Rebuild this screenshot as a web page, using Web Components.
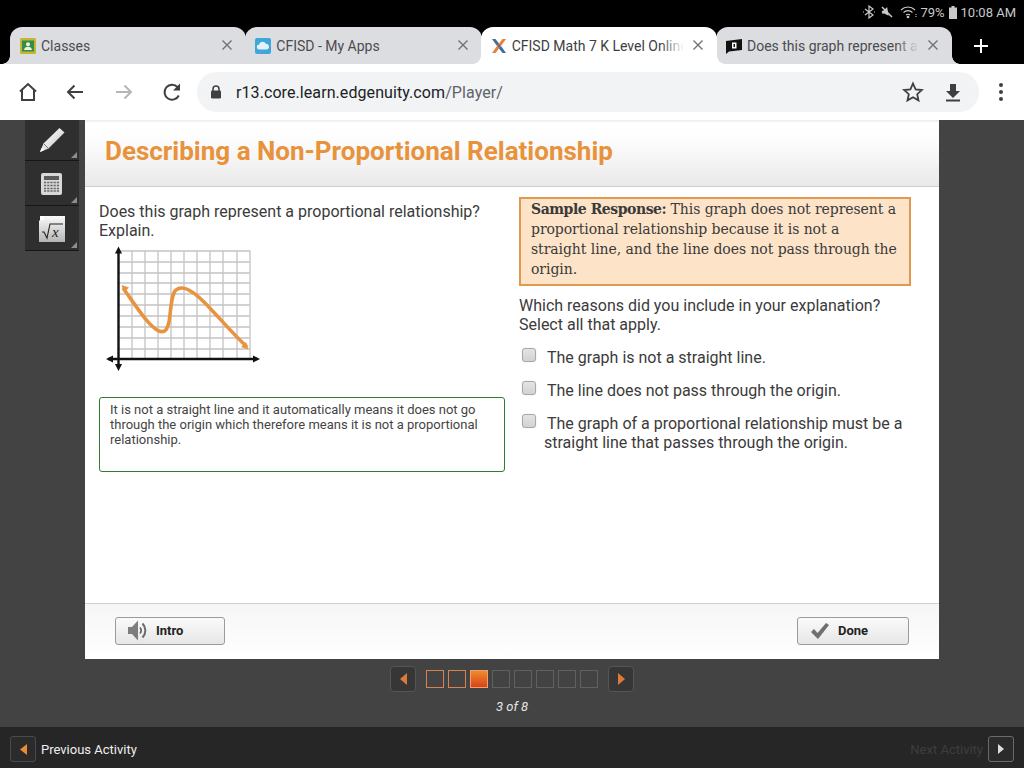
<!DOCTYPE html>
<html>
<head>
<meta charset="utf-8">
<title>Describing a Non-Proportional Relationship</title>
<style>
html, body { margin: 0; height: 100%; }
body {
  width: 1024px;
  height: 768px;
  overflow: hidden;
  display: flex;
  flex-direction: column;
  font-family: Roboto, sans-serif;
  background: #434343;
}
</style>
</head>
<body>
<status-bar></status-bar>
<tab-strip>
  <tab-item>
    <svg slot="icon" width="16" height="16" viewBox="0 0 16 16"><rect width="16" height="16" rx="1.500" fill="#c9b52e"/><rect x="2" y="2.500" width="12" height="11" fill="#2f8f4e"/><circle cx="8" cy="6.300" r="2" fill="#f3f0d8"/><path d="M4 12c.4-2.400 2-3.200 4-3.200s3.600.8 4 3.200z" fill="#f3f0d8"/></svg>
    Classes
  </tab-item>
  <tab-item>
    <svg slot="icon" width="16" height="16" viewBox="0 0 16 16"><rect width="16" height="16" rx="2" fill="#3fa6d8"/><path d="M4.500 11.500a2.500 2.500 0 0 1-.3-5 3.500 3.500 0 0 1 6.600-.8 2.900 2.900 0 0 1 .6 5.800z" fill="#e4f3fa"/></svg>
    CFISD - My Apps
  </tab-item>
  <tab-item active>
    <svg slot="icon" width="16" height="16" viewBox="0 0 16 16"><path d="M1 1l3.500 0L8 5.500 6 8z" fill="#4a6f96"/><path d="M15 1h-3.500L8 5.500 10 8z" fill="#e5813a"/><path d="M1 15h3.500L8 10.500 6 8z" fill="#e5813a"/><path d="M15 15h-3.500L8 10.500 10 8z" fill="#3a6ea5"/><path d="M6 8l2-2.500L10 8l-2 2.500z" fill="#8a5a50"/></svg>
    CFISD Math 7 K Level Online
  </tab-item>
  <tab-item>
    <svg slot="icon" width="16" height="16" viewBox="0 0 16 16"><path d="M0 3l16-2v11L3 13.500 0 16z" fill="#111"/><path d="M6 4.500h4.500v6H6z" fill="#fff"/><path d="M7.500 6h1.500v3H7.500z" fill="#111"/></svg>
    Does this graph represent a proportional
  </tab-item>
</tab-strip>
<url-bar></url-bar>
<player-stage>
  <tool-rail slot="tools"></tool-rail>
  <lesson-card slot="card">
    <span slot="title">Describing a Non-Proportional Relationship</span>
    <question-pane slot="left"></question-pane>
    <reason-pane slot="right"></reason-pane>
    <push-button slot="footer" kind="intro" style="width:110px">Intro</push-button>
    <push-button slot="footer" kind="done" style="width:112px">Done</push-button>
  </lesson-card>
  <page-nav slot="nav" current="3" total="8"></page-nav>
</player-stage>
<activity-bar></activity-bar>

<script>
function define(name, html, extra) {
  customElements.define(name, class extends HTMLElement {
    constructor() {
      super();
      this.attachShadow({ mode: "open" });
      this.shadowRoot.innerHTML = html;
      if (extra) extra(this);
    }
  });
}

define("status-bar", /*html*/ `
<style>
:host { display: flex; height: 27px; background: #000; color: #c9c9c9; justify-content: flex-end; align-items: center;
  font-size: 13px; padding: 0 8px 3px 0; box-sizing: border-box; gap: 4px; font-family: Roboto, sans-serif; }
svg { display: block; }
</style>
<svg width="12" height="14" viewBox="0 0 12 14" fill="none" stroke="#c9c9c9" stroke-width="1.200" style="margin-right:1px"><path d="M2 4l8 6-4 3V1l4 3-8 6"/><path d="M0 7h1M11 7h1"/></svg>
<svg width="14" height="14" viewBox="0 0 14 14" style="margin-right:2px"><path d="M2 5h2l4-3v9L4 8H2z" fill="#c9c9c9" transform="rotate(-10 7 7)"/><path d="M2 2l10 10" stroke="#c9c9c9" stroke-width="1.500"/></svg>
<svg width="18" height="14" viewBox="0 0 18 14" fill="none" stroke="#c9c9c9" stroke-width="1.100" style="margin-right:-2px"><path d="M1 5c4-4 10-4 14 0M3.500 7.500c2.500-2.500 6.500-2.500 9 0M6 10c1-1 3-1 4 0"/><circle cx="8" cy="12" r=".8" fill="#c9c9c9"/><path d="M16 9v3" stroke-dasharray="1 1"/></svg>
<span>79%</span>
<svg width="8" height="13" viewBox="0 0 8 13"><path d="M2.500 0h3v1.500H8V13H0V1.500h2.500z" fill="#c9c9c9"/></svg>
<span>10:08 AM</span>
`);

define("tab-strip", /*html*/ `
<style>
:host { display: flex; height: 37px; background: #000; padding-left: 10px; align-items: stretch; box-sizing: border-box; }
.plus { width: 59px; display: flex; align-items: center; justify-content: center; }
</style>
<slot></slot>
<div class="plus"><svg width="16" height="16" viewBox="0 0 16 16"><path d="M8 1v14M1 8h14" stroke="#fff" stroke-width="2"/></svg></div>
`);

define("tab-item", /*html*/ `
<style>
:host { --tab: #dcdde0; display: flex; align-items: center; width: 236.330px; box-sizing: border-box; background: var(--tab); color: #4a4c50;
  border-radius: 12px 12px 0 0; padding: 0 13px 0 10px; font-size: 14px; margin-right: -1px; position: relative; }
:host([active]) { --tab: #fff; color: #3c4043; z-index: 1; }
:host::before, :host::after { content: ""; position: absolute; bottom: 0; width: 8px; height: 8px; }
:host::before { left: -8px; background: radial-gradient(circle at 0 0, transparent 7.500px, var(--tab) 8px); }
:host::after { right: -8px; background: radial-gradient(circle at 100% 0, transparent 7.500px, var(--tab) 8px); }
.ico { width: 16px; height: 16px; flex: none; margin-right: 5px; }
.txt { flex: 1; white-space: nowrap; overflow: hidden; position: relative; min-width: 0; }
.txt::after { content: ""; position: absolute; right: 0; top: 0; bottom: 0; width: 24px; background: linear-gradient(90deg, rgba(220,221,224,0), #dcdde0); }
:host([active]) .txt::after { background: linear-gradient(90deg, rgba(255,255,255,0), #fff); }
svg.x { flex: none; margin-left: 8px; margin-top: -2px; }
</style>
<span class="ico"><slot name="icon"></slot></span>
<span class="txt"><slot></slot></span>
<svg class="x" width="12" height="12" viewBox="0 0 12 12"><path d="M1.500 1.500l9 9M10.500 1.500l-9 9" stroke="#6f7175" stroke-width="1.400"/></svg>
`);

define("url-bar", /*html*/ `
<style>
:host { display: flex; height: 56px; background: #fff; align-items: center; box-sizing: border-box; position: relative; z-index: 2; }
.btn { width: 24px; height: 24px; flex: none; display: block; }
.pill { margin-left: 13px; width: 782px; height: 40px; border-radius: 20px; background: #f1f3f4; display: flex; align-items: center;
  font-size: 16px; letter-spacing: .08px; color: #202124; box-sizing: border-box; padding-left: 13px; }
.host { color: #202124; }
.path { color: #5f6368; }
.lock { margin-right: 14px; }
.end { margin-left: auto; display: flex; gap: 16px; padding-right: 14px; }
</style>
<svg class="btn" style="margin-left:16px" viewBox="0 0 24 24" fill="none" stroke="#3c4043" stroke-width="2"><path d="M4 11.500L12 4l8 7.500M6 10v10h12V10"/></svg>
<svg class="btn" style="margin-left:23px" viewBox="0 0 24 24" fill="none" stroke="#3c4043" stroke-width="2"><path d="M20 12H5M11.500 5.500L5 12l6.500 6.500"/></svg>
<svg class="btn" style="margin-left:25px" viewBox="0 0 24 24" fill="none" stroke="#b4b6b9" stroke-width="2"><path d="M4 12h15M12.500 5.500L19 12l-6.500 6.500"/></svg>
<svg class="btn" style="margin-left:24px" viewBox="0 0 24 24" fill="none" stroke="#3c4043" stroke-width="2"><path d="M18.800 15.500A7.500 7.500 0 1 1 17.500 7"/><path d="M20 3.500v7h-7z" fill="#3c4043" stroke="none"/></svg>
<div class="pill">
  <svg class="lock" width="12" height="14" viewBox="0 0 12 14"><path d="M3 6V4a3 3 0 0 1 6 0v2" fill="none" stroke="#3c4043" stroke-width="1.500"/><rect x="1" y="5.500" width="10" height="8" rx="1.200" fill="#3c4043"/></svg>
  <span><span class="host">r13.core.learn.edgenuity.com</span><span class="path">/Player/</span></span>
  <span class="end">
    <svg class="btn" viewBox="0 0 24 24" fill="none" stroke="#3c4043" stroke-width="1.800"><path d="M12 3.500l2.600 5.800 6.300.7-4.700 4.200 1.300 6.200L12 17.200l-5.500 3.200 1.300-6.200L3.100 10l6.300-.7z"/></svg>
    <svg class="btn" viewBox="0 0 24 24"><path d="M9 4h6v7h4l-7 7-7-7h4z" fill="#3c4043"/><path d="M5 20.500h14" stroke="#3c4043" stroke-width="2"/></svg>
  </span>
</div>
<svg class="btn" style="margin-left:10px" viewBox="0 0 24 24" fill="#3c4043"><circle cx="12" cy="5" r="2"/><circle cx="12" cy="12" r="2"/><circle cx="12" cy="19" r="2"/></svg>
`);

define("player-stage", /*html*/ `
<style>
:host { flex: 1; display: grid; grid-template-columns: 25px 54px 6px 854px 1fr; grid-template-rows: 539px 1fr; background: #434343; min-height: 0; }
.tools { grid-column: 2; grid-row: 1; }
.card { grid-column: 4; grid-row: 1; display: flex; min-height: 0; }
.nav { grid-column: 1 / -1; grid-row: 2; }
</style>
<div class="tools"><slot name="tools"></slot></div>
<div class="card"><slot name="card"></slot></div>
<div class="nav"><slot name="nav"></slot></div>
`);

define("tool-rail", /*html*/ `
<style>
:host { display: flex; flex-direction: column; }
.t { height: 44px; background: #2f2f2f; border-bottom: 1px solid #161616; position: relative; display: flex; align-items: center; justify-content: center; }
.t:first-of-type { height: 40px; }
.t svg { margin-top: 2px; }
.t:first-of-type svg { margin-top: 0; }
.t::after { content: ""; position: absolute; right: 2px; bottom: 2px; width: 0; height: 0; border-style: solid; border-width: 0 0 6px 6px; border-color: transparent transparent #8d8d8d transparent; }
</style>
<div class="t"><svg width="26" height="26" viewBox="0 0 26 26"><defs><linearGradient id="p" x1="0" y1="0" x2="1" y2="1"><stop offset="0" stop-color="#ffffff"/><stop offset=".5" stop-color="#e4e4e4"/><stop offset="1" stop-color="#b0b0b0"/></linearGradient></defs><path d="M20.500 1l5 4.500-16 16L1 25l3.500-8.500z" fill="url(#p)"/><path d="M1 25l1.500-4 2.500 2.200z" fill="#fff"/><path d="M5 17l4 4" stroke="#777" stroke-width="1"/></svg></div>
<div class="t"><svg width="22" height="24" viewBox="0 0 22 24"><rect width="21" height="22" y="1" rx="2" fill="#d8d8d8"/><rect x="3" y="4" width="15" height="4" fill="#5b5b5b"/><path d="M3 10.500h15M3 13.500h15M3 16.500h15M3 19h15" stroke="#666" stroke-width="1.500" stroke-dasharray="2.200 1"/></svg></div>
<div class="t"><svg width="26" height="26" viewBox="0 0 26 26"><defs><linearGradient id="q" x1="0" y1="0" x2="0" y2="1"><stop offset="0" stop-color="#fafafa"/><stop offset="1" stop-color="#b5b5b5"/></linearGradient></defs><path d="M5 0h21v26H0V5z" fill="url(#q)"/><path d="M1 0h4v4H1z" fill="#fff"/><path d="M3 16h2l3 6 3-14h13" fill="none" stroke="#222" stroke-width="1.100"/><text x="13" y="21" font-family="Liberation Serif, serif" font-style="italic" font-size="15" fill="#222">x</text></svg></div>
`);

define("lesson-card", /*html*/ `
<style>
:host { display: flex; flex-direction: column; width: 854px; height: 539px; background: #fff; color: #3b3b3b; }
header { flex: none; box-sizing: border-box; padding: 0 20px 5px; display: flex; align-items: center;
  background: linear-gradient(#ececec 0, #fff 5%, #fdfdfd 30%, #e9e9e9 100%); border-bottom: 1px solid #cfcfcf; height: 67px;
  font: 700 26px Roboto, sans-serif; color: #e8923b; }
main { flex: 1; display: grid; grid-template-columns: 406px 392px; column-gap: 14px; padding: 10px 14px 0; min-height: 0; }
footer { height: 56px; flex: none; box-sizing: border-box; border-top: 1px solid #cfcfcf; padding: 13px 30px 0; display: flex; justify-content: space-between; align-items: flex-start;
  background: linear-gradient(#f6f6f6, #fff); }
</style>
<header><slot name="title"></slot></header>
<main><div><slot name="left"></slot></div><div><slot name="right"></slot></div></main>
<footer><slot name="footer"></slot></footer>
`);

define("question-pane", /*html*/ `
<style>
:host { display: block; font-size: 16px; line-height: 19px; color: #3b3b3b; }
p { margin: 5px 0 0; }
svg { display: block; margin: 5px 0 0 6px; }
.answer { box-sizing: border-box; width: 406px; height: 75px; margin-top: 25px; border: 1px solid #2e7d32; border-radius: 3px; padding: 4px 10px;
  font: 13px/15px Roboto, sans-serif; color: #444; }
</style>
<p>Does this graph represent a proportional relationship? Explain.</p>
<svg width="156" height="127" viewBox="105 245 156 127">
  <g stroke="#c4c4c4" stroke-width="1.300" fill="none">
    <path d="M119 251H250V359M132 251V359M145 251V359M158 251V359M171 251V359M184 251V359M197 251V359M210 251V359M223 251V359M237 251V359"/>
    <path d="M119 262H250M119 273H250M119 283H250M119 294H250M119 305H250M119 316H250M119 327H250M119 338H250M119 349H250"/>
  </g>
  <path d="M118.500 250V368M108 359H257" stroke="#111" stroke-width="2.400"/>
  <path d="M118.500 246.500l-3.500 7h7zM118.500 371l-3.500-7h7zM106 359l7-3.500v7zM260 359l-7-3.500v7z" fill="#111"/>
  <path d="M123 288C134 303 148 326 159 331C165 333 167 330 169 322C171 310 171 294 176 290C183 284 194 292 204 302C216 314 232 333 247 347" fill="none" stroke="#e8943f" stroke-width="3.600"/>
  <path d="M121.500 285l7.500 2.500-5 5zM248.500 349.500l-7.500-2.500 5-5z" fill="#e8943f"/>
</svg>
<div class="answer">It is not a straight line and it automatically means it does not go through the origin which therefore means it is not a proportional relationship.</div>
`);

define("reason-pane", /*html*/ `
<style>
:host { display: block; font-size: 16px; line-height: 19px; color: #3b3b3b; }
.sample { box-sizing: border-box; width: 392px; height: 89px; border: 2px solid #e09a4f; background: #fde4c8; padding: 0 10px;
  font: 14px/20px "DejaVu Serif", serif; letter-spacing: -0.07px; color: #3a3a3a; }
.sample b { letter-spacing: -0.46px; }
.q { margin: 10px 0 14px; }
check-row { margin-bottom: 14px; }
</style>
<div class="sample"><b>Sample Response:</b> This graph does not represent a proportional relationship because it is not a<br>straight line, and the line does not pass through the origin.</div>
<p class="q">Which reasons did you include in your explanation? Select all that apply.</p>
<check-row>The graph is not a straight line.</check-row>
<check-row>The line does not pass through the origin.</check-row>
<check-row>The graph of a proportional relationship must be a straight line that passes through the origin.</check-row>
`);

define("check-row", /*html*/ `
<style>
:host { display: block; position: relative; padding-left: 25px; text-indent: 3px; }
i { position: absolute; left: 3px; top: 0; width: 14px; height: 14px; box-sizing: border-box; border: 1px solid #a8a8a8; border-radius: 3px;
  background: linear-gradient(#e4e4e4, #d2d2d2); box-shadow: 0 0 1px #bbb; }
</style>
<i></i><slot></slot>
`);

define("push-button", /*html*/ `
<style>
:host { display: flex; align-items: center; box-sizing: border-box; height: 28px; padding-bottom: 1px; border: 1px solid #9b9b9b; border-radius: 3px;
  background: linear-gradient(#fafafa, #e6e6e6); font: 700 13px Roboto, sans-serif; color: #222; }
</style>
<span id="ic"></span><slot></slot>
`, (el) => {
  const icons = {
    intro: `<svg style="display:block;margin:0 9px 0 12px" width="19" height="21" viewBox="0 0 19 21"><path d="M0 7h4l6-6.500v20L4 14H0z" fill="#7d7d7d"/><path d="M12 7.500c1.300 1.700 1.300 4.300 0 6" fill="none" stroke="#6a6a6a" stroke-width="1.800"/><path d="M14.500 3.500c3.800 4 3.800 10 0 14" fill="none" stroke="#6a6a6a" stroke-width="2"/></svg>`,
    done: `<svg style="display:block;margin:0 9px 0 13px" width="18" height="16" viewBox="0 0 18 16"><path d="M0 9l3-3 3.500 4L15 0l3 2L7 16z" fill="#6f6f6f"/></svg>`,
  };
  el.shadowRoot.getElementById("ic").innerHTML = icons[el.getAttribute("kind")] || "";
});

define("nav-btn", /*html*/ `
<style>
:host { display: flex; align-items: center; justify-content: center; width: 26px; height: 26px; box-sizing: border-box;
  background: #363636; border: 1px solid #555; border-radius: 4px; }
:host([dir=next]) svg { transform: scaleX(-1); }
</style>
<svg width="7" height="12" viewBox="0 0 7 12"><path d="M7 0v12L0 6z" fill="#dc7a3c"/></svg>
`);

define("page-nav", /*html*/ `
<style>
:host { display: flex; flex-direction: column; align-items: center; padding-top: 7px; color: #e6e6e6; }
.row { display: flex; align-items: center; }
.boxes { display: flex; gap: 4px; margin: 0 10px; }
.boxes i { width: 18px; height: 18px; box-sizing: border-box; border: 1px solid #606060; display: block; }
.boxes i.seen { border-color: #d98250; }
.boxes i.now { border-color: #f0a070; background: linear-gradient(#f08a2c, #d8431a); }
.count { font: italic 13px/16px Roboto, sans-serif; margin-top: 7px; }
</style>
<div class="row"><nav-btn></nav-btn><div class="boxes" id="b"></div><nav-btn dir="next"></nav-btn></div>
<div class="count" id="c"></div>
`, (el) => {
  const cur = +el.getAttribute("current"), total = +el.getAttribute("total");
  let s = "";
  for (let i = 1; i <= total; i++) s += `<i class="${i < cur ? "seen" : i === cur ? "now" : ""}"></i>`;
  el.shadowRoot.getElementById("b").innerHTML = s;
  el.shadowRoot.getElementById("c").textContent = cur + " of " + total;
});

define("activity-bar", /*html*/ `
<style>
:host { display: flex; height: 41px; flex: none; background: #262626; align-items: center; justify-content: space-between; padding: 3px 10px 0; box-sizing: border-box;
  font: 13px Roboto, sans-serif; color: #eee; }
.side { display: flex; align-items: center; gap: 5px; }
.off { color: #3e3e3e; }
.b { width: 26px; height: 26px; box-sizing: border-box; border: 1px solid #4a4a4a; border-radius: 3px; display: flex; align-items: center; justify-content: center; background: #2b2b2b; }
</style>
<div class="side"><span class="b"><svg width="7" height="11" viewBox="0 0 7 11"><path d="M7 0v11L0 5.500z" fill="#ea8a35"/></svg></span><span>Previous Activity</span></div>
<div class="side"><span class="off">Next Activity</span><span class="b" style="border-color:#6a6a6a"><svg width="6" height="10" viewBox="0 0 6 10"><path d="M0 0v10l6-5z" fill="#ddd"/></svg></span></div>
`);
</script>
</body>
</html>
